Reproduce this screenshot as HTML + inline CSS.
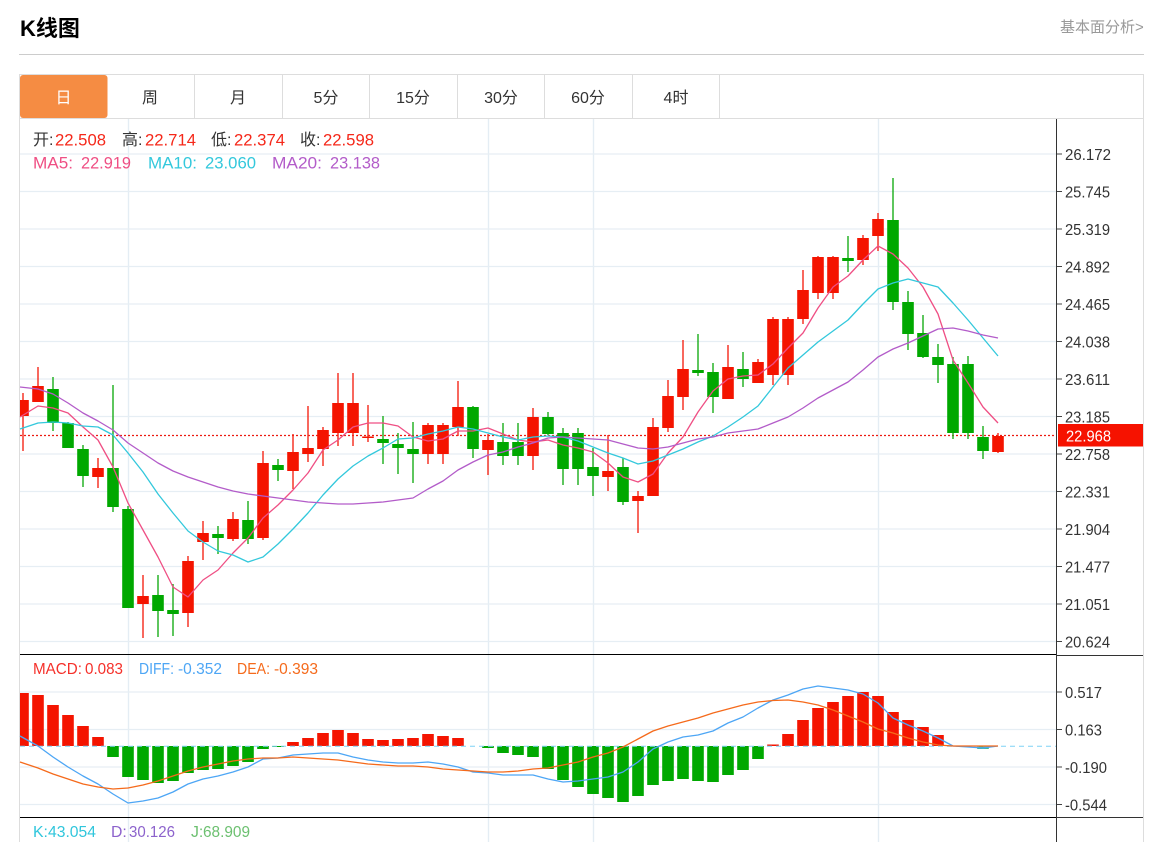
<!DOCTYPE html>
<html lang="zh-CN">
<head>
<meta charset="utf-8">
<title>K线图</title>
<style>
html,body{margin:0;padding:0;background:#fff;width:1168px;height:842px;overflow:hidden}
svg{display:block;position:absolute;left:0;top:0}
text{font-family:"Liberation Sans","Noto Sans CJK SC",sans-serif;font-size:16px}
.ax{font-size:16px;fill:#333}
.tab{fill:#333;text-anchor:middle}
.lg{font-size:16.8px}
.sm{font-size:15.8px}
</style>
</head>
<body>
<svg width="1168" height="842" viewBox="0 0 1168 842" xmlns="http://www.w3.org/2000/svg">
<text x="20" y="36" style="font-size:22px;font-weight:bold" fill="#000">K线图</text>
<text x="1060" y="32" style="font-size:15px" fill="#999">基本面分析&gt;</text>
<path d="M19 54.5H1144" stroke="#ccc" fill="none"/>

<!-- frame -->
<path d="M19.5 842V74.5H1143.5V842" stroke="#ddd" fill="none"/>
<path d="M20 118.5H1143M194.5 75V118M282.5 75V118M369.5 75V118M457.5 75V118M544.5 75V118M632.5 75V118M719.5 75V118" stroke="#ddd" fill="none"/>
<rect x="20" y="75" width="87.5" height="43" rx="3" fill="#f58c43"/>
<text class="tab" x="63.5" y="103" style="fill:#fff">日</text>
<text class="tab" x="150" y="103">周</text>
<text class="tab" x="238" y="103">月</text>
<text class="tab" x="326" y="103">5分</text>
<text class="tab" x="413" y="103">15分</text>
<text class="tab" x="501" y="103">30分</text>
<text class="tab" x="588" y="103">60分</text>
<text class="tab" x="676" y="103">4时</text>

<!-- grid -->
<path d="M128.5 119V842M488.5 119V842M593.5 119V842M878.5 119V842" stroke="#e4edf4" stroke-width="1.4" fill="none"/>
<path d="M20 154H1056M20 191.5H1056M20 229H1056M20 266.5H1056M20 304H1056M20 341.5H1056M20 379H1056M20 416.5H1056M20 454H1056M20 491.5H1056M20 529H1056M20 566.5H1056M20 604H1056M20 641.5H1056M20 692H1056M20 729.5H1056M20 767H1056M20 804.5H1056" stroke="#e6eef4" stroke-width="1.3" fill="none"/>

<!-- price line -->
<path d="M20 435.5H1056" stroke="#ec1a10" stroke-width="1.2" stroke-dasharray="2 2" fill="none"/>

<!-- candle wicks -->
<path d="M23 393V451M38 367V402M98 458V488M143 575V638M188 556V627M203 521V560M233 512V541M263 451V540M293 434V489M308 406V462M323 427V466M338 373V446M353 373V446M368 405V442M428 423V464M443 423V464M458 381V436M488 434V475M533 408V470M608 435V491M638 491V533M653 418V496M668 380V432M683 340V410M728 345V399M758 359V383M773 317V385M788 317V385M803 270V324M818 256V299M833 256V299M863 235V265M878 213V251M998 433V453" stroke="#f5281a" stroke-width="1.4" fill="none"/>
<path d="M53 377V431M68 422V448M83 445V487M113 385V512M128 506V608M158 575V637M173 584V636M218 526V554M248 501V544M278 459V481M383 416V464M398 433V474M413 422V483M473 406V458M503 423V465M518 423V465M548 412V435M563 428V485M578 428V485M593 448V496M623 458V505M698 334V376M713 363V413M743 352V387M848 236V272M893 178V310M908 291V350M923 315V358M938 344V383M953 357V439M968 356V439M983 426V459" stroke="#1aad1a" stroke-width="1.4" fill="none"/>

<!-- candle bodies -->
<path fill="#f41400" d="M20 400h8.8V416H20zM32.2 386h11.6V402h-11.6zM92.2 468h11.6V477h-11.6zM137.2 596h11.6V604h-11.6zM182.2 561h11.6V613h-11.6zM197.2 533h11.6V542h-11.6zM227.2 519h11.6V539h-11.6zM257.2 463h11.6V538h-11.6zM287.2 452h11.6V471h-11.6zM302.2 448h11.6V454h-11.6zM317.2 430h11.6V449h-11.6zM332.2 403h11.6V433h-11.6zM347.2 403h11.6V433h-11.6zM362.2 436.5h11.6V438h-11.6zM422.2 425h11.6V454h-11.6zM437.2 425h11.6V454h-11.6zM452.2 407h11.6V427h-11.6zM482.2 440h11.6V450h-11.6zM527.2 417h11.6V456h-11.6zM602.2 471h11.6V477h-11.6zM632.2 496h11.6V501h-11.6zM647.2 427h11.6V496h-11.6zM662.2 396h11.6V428h-11.6zM677.2 369h11.6V397h-11.6zM722.2 367h11.6V399h-11.6zM752.2 362h11.6V383h-11.6zM767.2 319h11.6V375h-11.6zM782.2 319h11.6V375h-11.6zM797.2 290h11.6V319h-11.6zM812.2 257h11.6V293h-11.6zM827.2 257h11.6V293h-11.6zM857.2 238h11.6V260h-11.6zM872.2 219h11.6V236h-11.6zM992.2 436h11.6V452h-11.6z"/>
<path fill="#00a800" d="M47.2 389h11.6V423h-11.6zM62.2 423h11.6V448h-11.6zM77.2 449h11.6V476h-11.6zM107.2 468h11.6V507h-11.6zM122.2 509h11.6V608h-11.6zM152.2 595h11.6V611h-11.6zM167.2 610h11.6V614h-11.6zM212.2 534h11.6V538h-11.6zM242.2 520h11.6V539h-11.6zM272.2 465h11.6V470h-11.6zM377.2 439h11.6V443h-11.6zM392.2 444h11.6V448h-11.6zM407.2 449h11.6V454h-11.6zM467.2 407h11.6V449h-11.6zM497.2 442h11.6V456h-11.6zM512.2 442h11.6V456h-11.6zM542.2 417h11.6V434h-11.6zM557.2 433h11.6V469h-11.6zM572.2 433h11.6V469h-11.6zM587.2 467h11.6V476h-11.6zM617.2 467h11.6V502h-11.6zM692.2 370h11.6V373h-11.6zM707.2 372h11.6V397h-11.6zM737.2 369h11.6V379h-11.6zM842.2 258h11.6V261h-11.6zM887.2 220h11.6V302h-11.6zM902.2 302h11.6V334h-11.6zM917.2 333h11.6V357h-11.6zM932.2 357h11.6V365h-11.6zM947.2 364h11.6V433h-11.6zM962.2 364h11.6V433h-11.6zM977.2 437h11.6V451h-11.6z"/>

<!-- MA lines -->
<polyline fill="none" stroke="#ef4f84" stroke-width="1.3" stroke-linejoin="round" points="20,417 38,406 53,408 68,413 83,427 98,440 113,467 128,503 143,530 158,557 173,587 188,597 203,580 218,570 233,553 248,538 263,518 278,505 293,490 308,473 323,450 338,440 353,427 368,423 383,423 398,426 413,437 428,441 443,439 458,431 473,431 488,428 503,434 518,440 533,442 548,440 563,445 578,448 593,452 608,463 623,477 638,482 653,474 668,453 683,437 698,412 713,391 728,379 743,376 758,375 773,364 788,348 803,333 818,308 833,287 848,276 863,260 878,246 893,254 908,268 923,287 938,314 953,360 968,383 983,407 998,423"/>
<polyline fill="none" stroke="#33c8dc" stroke-width="1.3" stroke-linejoin="round" points="20,429 38,423 53,422 68,423 83,426 98,427 113,435 128,453 143,472 158,494 173,513 188,531 203,542 218,551 233,555 248,562 263,557 278,544 293,529 308,513 323,495 338,479 353,466 368,456 383,448 398,439 413,438 428,434 443,431 458,427 473,429 488,433 503,437 518,440 533,437 548,436 563,437 578,441 593,447 608,453 623,458 638,464 653,461 668,455 683,449 698,442 713,436 728,427 743,417 758,406 773,387 788,368 803,355 818,342 833,331 848,320 863,304 878,289 893,283 908,279 923,283 938,287 953,303 968,320 983,338 998,356"/>
<polyline fill="none" stroke="#b35cc9" stroke-width="1.3" stroke-linejoin="round" points="20,387 38,389 53,394 68,403 83,413 98,421 113,430 128,443 143,453 158,463 173,471 188,477 203,482 218,487 233,491 248,494 263,496 278,498 293,500 308,502 323,503 338,504 353,504 368,503 383,502 398,500 413,498 428,489 443,481 458,470 473,462 488,455 503,452 518,447 533,443 548,438 563,437 578,438 593,439 608,440 623,444 638,448 653,449 668,447 683,443 698,439 713,437 728,433 743,431 758,429 773,423 788,417 803,408 818,398 833,390 848,382 863,370 878,357 893,349 908,343 923,336 938,329 953,328 968,331 983,335 998,338"/>

<!-- MACD bars -->
<path fill="#f41400" d="M20 693h8.8V746H20zM32.2 695h11.6V746h-11.6zM47.2 705h11.6V746h-11.6zM62.2 715h11.6V746h-11.6zM77.2 726h11.6V746h-11.6zM92.2 737h11.6V746h-11.6zM287.2 742h11.6V746h-11.6zM302.2 738h11.6V746h-11.6zM317.2 733h11.6V746h-11.6zM332.2 730h11.6V746h-11.6zM347.2 733h11.6V746h-11.6zM362.2 739h11.6V746h-11.6zM377.2 740h11.6V746h-11.6zM392.2 739h11.6V746h-11.6zM407.2 738h11.6V746h-11.6zM422.2 734h11.6V746h-11.6zM437.2 736h11.6V746h-11.6zM452.2 738h11.6V746h-11.6zM767.2 744.5h11.6V746h-11.6zM782.2 734h11.6V746h-11.6zM797.2 720h11.6V746h-11.6zM812.2 708h11.6V746h-11.6zM827.2 702h11.6V746h-11.6zM842.2 696h11.6V746h-11.6zM857.2 692h11.6V746h-11.6zM872.2 696h11.6V746h-11.6zM887.2 712h11.6V746h-11.6zM902.2 720h11.6V746h-11.6zM917.2 727h11.6V746h-11.6zM932.2 735h11.6V746h-11.6z"/>
<path fill="#00a800" d="M107.2 746h11.6V757h-11.6zM122.2 746h11.6V777h-11.6zM137.2 746h11.6V780h-11.6zM152.2 746h11.6V783h-11.6zM167.2 746h11.6V781h-11.6zM182.2 746h11.6V773h-11.6zM197.2 746h11.6V770h-11.6zM212.2 746h11.6V769h-11.6zM227.2 746h11.6V766h-11.6zM242.2 746h11.6V762h-11.6zM257.2 746h11.6V749h-11.6zM272.2 746h11.6V747h-11.6zM482.2 746h11.6V748h-11.6zM497.2 746h11.6V753h-11.6zM512.2 746h11.6V755h-11.6zM527.2 746h11.6V757h-11.6zM542.2 746h11.6V769h-11.6zM557.2 746h11.6V780h-11.6zM572.2 746h11.6V787h-11.6zM587.2 746h11.6V794h-11.6zM602.2 746h11.6V798h-11.6zM617.2 746h11.6V802h-11.6zM632.2 746h11.6V796h-11.6zM647.2 746h11.6V785h-11.6zM662.2 746h11.6V781h-11.6zM677.2 746h11.6V779h-11.6zM692.2 746h11.6V781h-11.6zM707.2 746h11.6V782h-11.6zM722.2 746h11.6V775h-11.6zM737.2 746h11.6V770h-11.6zM752.2 746h11.6V759h-11.6z"/>
<path d="M977.2 746.5h11.6V749h-11.6z" fill="#3dbb8a"/>
<path d="M20 746.3H1056" stroke="#7fd2f5" stroke-width="1" stroke-dasharray="5 4" fill="none"/>

<polyline fill="none" stroke="#4da6f5" stroke-width="1.3" stroke-linejoin="round" points="20,736 38,746 53,757 68,767 83,776 98,784 113,794 128,803 143,801 158,798 173,792 188,784 203,779 218,776 233,772 248,767 263,759 278,758 293,755 308,754 323,753 338,753 353,757 368,760 383,762 398,763 413,763 428,762 443,764 458,767 473,772 488,773 503,775 518,775 533,775 548,779 563,782 578,781 593,779 608,777 623,772 638,762 653,749 668,742 683,737 698,735 713,731 728,723 743,717 758,708 773,700 788,695 803,689 818,686 833,688 848,690 863,694 878,703 893,718 908,725 923,731 938,738 953,746 968,747 983,748 998,746"/>
<polyline fill="none" stroke="#f56a1b" stroke-width="1.3" stroke-linejoin="round" points="20,762 38,768 53,774 68,779 83,784 98,787 113,789 128,788 143,785 158,781 173,776 188,771 203,767 218,764 233,761 248,759 263,758 278,758 293,757 308,758 323,759 338,760 353,762 368,764 383,765 398,766 413,766 428,767 443,769 458,770 473,771 488,772 503,772 518,771 533,769 548,768 563,765 578,762 593,757 608,753 623,747 638,739 653,731 668,726 683,722 698,718 713,713 728,709 743,705 758,702 773,700.5 788,700 803,702 818,705 833,710 848,716 863,722 878,729 893,733 908,738 923,742 938,745 953,746 968,746 983,746 998,746"/>

<!-- structural lines -->
<path d="M20 654.5H1056M20 817.5H1056" stroke="#000" fill="none"/>
<path d="M1056 655.5H1143M1056 817.5H1143" stroke="#333" fill="none"/>
<path d="M1056.5 119V842" stroke="#333" fill="none"/>
<path d="M1057 154H1062M1057 191.5H1062M1057 229H1062M1057 266.5H1062M1057 304H1062M1057 341.5H1062M1057 379H1062M1057 416.5H1062M1057 454H1062M1057 491.5H1062M1057 529H1062M1057 566.5H1062M1057 604H1062M1057 641.5H1062M1057 692H1062M1057 729.5H1062M1057 767H1062M1057 804.5H1062" stroke="#444" fill="none"/>

<!-- axis labels -->
<text class="ax" x="1065" y="160" textLength="46" lengthAdjust="spacingAndGlyphs">26.172</text>
<text class="ax" x="1065" y="197.5" textLength="45" lengthAdjust="spacingAndGlyphs">25.745</text>
<text class="ax" x="1065" y="235" textLength="45" lengthAdjust="spacingAndGlyphs">25.319</text>
<text class="ax" x="1065" y="272.5" textLength="45" lengthAdjust="spacingAndGlyphs">24.892</text>
<text class="ax" x="1065" y="310" textLength="45" lengthAdjust="spacingAndGlyphs">24.465</text>
<text class="ax" x="1065" y="347.5" textLength="45" lengthAdjust="spacingAndGlyphs">24.038</text>
<text class="ax" x="1065" y="385" textLength="45" lengthAdjust="spacingAndGlyphs">23.611</text>
<text class="ax" x="1065" y="422.5" textLength="45" lengthAdjust="spacingAndGlyphs">23.185</text>
<text class="ax" x="1065" y="460" textLength="45" lengthAdjust="spacingAndGlyphs">22.758</text>
<text class="ax" x="1065" y="497.5" textLength="45" lengthAdjust="spacingAndGlyphs">22.331</text>
<text class="ax" x="1065" y="535" textLength="45" lengthAdjust="spacingAndGlyphs">21.904</text>
<text class="ax" x="1065" y="572.5" textLength="45" lengthAdjust="spacingAndGlyphs">21.477</text>
<text class="ax" x="1065" y="610" textLength="45" lengthAdjust="spacingAndGlyphs">21.051</text>
<text class="ax" x="1065" y="647.5" textLength="45" lengthAdjust="spacingAndGlyphs">20.624</text>
<rect x="1058" y="424" width="85" height="22.5" fill="#f61200"/>
<text x="1066" y="441.5" fill="#fff" textLength="45" lengthAdjust="spacingAndGlyphs">22.968</text>
<text class="ax" x="1065" y="698" textLength="37" lengthAdjust="spacingAndGlyphs">0.517</text>
<text class="ax" x="1065" y="735.5" textLength="37" lengthAdjust="spacingAndGlyphs">0.163</text>
<text class="ax" x="1065" y="773" textLength="42" lengthAdjust="spacingAndGlyphs">-0.190</text>
<text class="ax" x="1065" y="810.5" textLength="42" lengthAdjust="spacingAndGlyphs">-0.544</text>

<!-- legends -->
<text x="33" y="145" fill="#333">开:</text><text class="lg" x="55" y="145.5" fill="#f5281a" textLength="51" lengthAdjust="spacingAndGlyphs">22.508</text>
<text x="122" y="145" fill="#333">高:</text><text class="lg" x="145" y="145.5" fill="#f5281a" textLength="51" lengthAdjust="spacingAndGlyphs">22.714</text>
<text x="211" y="145" fill="#333">低:</text><text class="lg" x="234" y="145.5" fill="#f5281a" textLength="51" lengthAdjust="spacingAndGlyphs">22.374</text>
<text x="300" y="145" fill="#333">收:</text><text class="lg" x="323" y="145.5" fill="#f5281a" textLength="51" lengthAdjust="spacingAndGlyphs">22.598</text>

<text class="lg" x="33" y="168.5" fill="#ef4f84" textLength="40" lengthAdjust="spacingAndGlyphs">MA5:</text><text class="lg" x="81" y="168.5" fill="#ef4f84" textLength="50" lengthAdjust="spacingAndGlyphs">22.919</text>
<text class="lg" x="148" y="168.5" fill="#33c8dc" textLength="49" lengthAdjust="spacingAndGlyphs">MA10:</text><text class="lg" x="205" y="168.5" fill="#33c8dc" textLength="51" lengthAdjust="spacingAndGlyphs">23.060</text>
<text class="lg" x="272" y="168.5" fill="#b35cc9" textLength="50" lengthAdjust="spacingAndGlyphs">MA20:</text><text class="lg" x="330" y="168.5" fill="#b35cc9" textLength="50" lengthAdjust="spacingAndGlyphs">23.138</text>

<text class="sm" x="33" y="674" fill="#f5302a" textLength="49" lengthAdjust="spacingAndGlyphs">MACD:</text><text class="sm" x="85" y="674" fill="#f5302a" textLength="38" lengthAdjust="spacingAndGlyphs">0.083</text>
<text class="sm" x="139" y="674" fill="#4da6f5" textLength="35" lengthAdjust="spacingAndGlyphs">DIFF:</text><text class="sm" x="178" y="674" fill="#4da6f5" textLength="44" lengthAdjust="spacingAndGlyphs">-0.352</text>
<text class="sm" x="237" y="674" fill="#f56a1b" textLength="33" lengthAdjust="spacingAndGlyphs">DEA:</text><text class="sm" x="274" y="674" fill="#f56a1b" textLength="44" lengthAdjust="spacingAndGlyphs">-0.393</text>

<text class="sm" x="33" y="837" fill="#30c6dc">K:</text><text class="sm" x="48" y="837" fill="#30c6dc" textLength="48" lengthAdjust="spacingAndGlyphs">43.054</text>
<text class="sm" x="111" y="837" fill="#8c62cc">D:</text><text class="sm" x="129" y="837" fill="#8c62cc" textLength="46" lengthAdjust="spacingAndGlyphs">30.126</text>
<text class="sm" x="191" y="837" fill="#6cc070">J:</text><text class="sm" x="203" y="837" fill="#6cc070" textLength="47" lengthAdjust="spacingAndGlyphs">68.909</text>
</svg>
</body>
</html>
